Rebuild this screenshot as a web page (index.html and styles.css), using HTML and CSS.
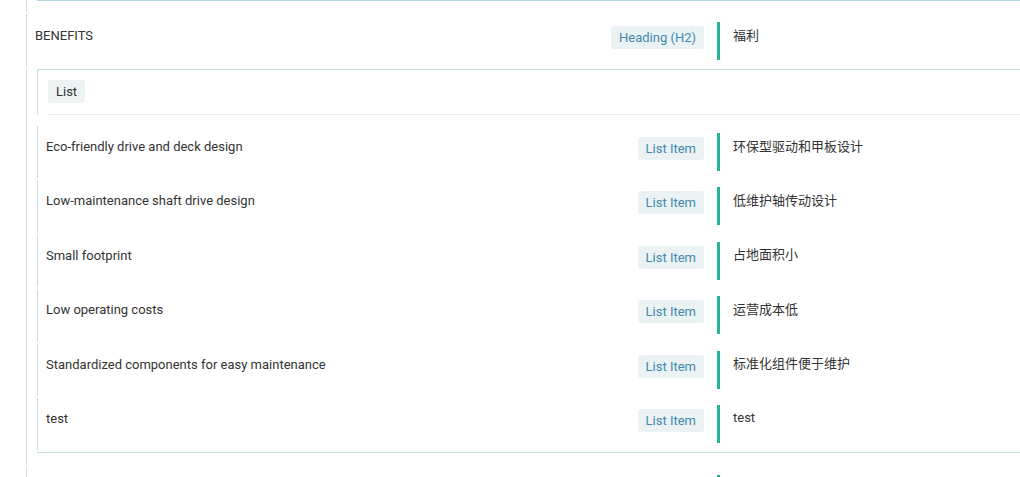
FILE: index.html
```html
<!DOCTYPE html>
<html lang="en">
<head>
  <meta charset="UTF-8">
  <meta name="viewport" content="width=device-width, initial-scale=1.0">
  <title>Translation editor</title>
  <link rel="stylesheet" href="styles.css">
</head>
<body>
  <div class="page">
    <div class="row prev">
      <div class="box-tail"></div>
    </div>

    <div class="row">
      <div class="src">
        <span class="text">BENEFITS</span>
        <span class="tag">Heading (H2)</span>
      </div>
      <div class="tgt">福利</div>
    </div>

    <div class="row list-row">
      <div class="box">
        <div class="box-head">
          <span class="tag tag-plain">List</span>
          <div class="sep"></div>
        </div>
        <div class="item">
          <div class="src">
            <span class="text">Eco-friendly drive and deck design</span>
            <span class="tag">List Item</span>
          </div>
          <div class="tgt">环保型驱动和甲板设计</div>
        </div>
        <div class="item">
          <div class="src">
            <span class="text">Low-maintenance shaft drive design</span>
            <span class="tag">List Item</span>
          </div>
          <div class="tgt">低维护轴传动设计</div>
        </div>
        <div class="item">
          <div class="src">
            <span class="text">Small footprint</span>
            <span class="tag">List Item</span>
          </div>
          <div class="tgt">占地面积小</div>
        </div>
        <div class="item">
          <div class="src">
            <span class="text">Low operating costs</span>
            <span class="tag">List Item</span>
          </div>
          <div class="tgt">运营成本低</div>
        </div>
        <div class="item">
          <div class="src">
            <span class="text">Standardized components for easy maintenance</span>
            <span class="tag">List Item</span>
          </div>
          <div class="tgt">标准化组件便于维护</div>
        </div>
        <div class="item">
          <div class="src">
            <span class="text">test</span>
            <span class="tag">List Item</span>
          </div>
          <div class="tgt">test</div>
        </div>
      </div>
    </div>

    <div class="row">
      <div class="src">
        <span class="text"></span>
      </div>
      <div class="tgt"></div>
    </div>
  </div>
</body>
</html>
```

FILE: styles.css
```css
html, body {
  overflow: hidden;
}

body {
  margin: 0;
  background: #fff;
  font-family: Roboto, "Noto Sans CJK SC", sans-serif;
  font-size: 13px;
  line-height: 20px;
  color: #333;
}

.page {
  width: 1300px;
  padding-left: 26px;
}

.row {
  display: flex;
  align-items: flex-start;
  border-left: 1px solid #dcdcdc;
  padding: 8px 0 7px 8px;
  margin-bottom: 2px;
}

.prev {
  padding: 0 0 0 8px;
  height: 12px;
}

.box-tail {
  flex: 1;
  margin-left: 2px;
  border-top: 1px solid #b3d8dd;
}

.list-row {
  padding: 0 0 12px 8px;
}

.src {
  flex: 0 0 682px;
  box-sizing: border-box;
  padding-right: 13px;
  display: flex;
  justify-content: space-between;
  align-items: flex-start;
}

.src .text {
  margin-top: 4px;
}

.tag {
  display: inline-block;
  margin-top: 4px;
  padding: 2px 8px;
  line-height: 19px;
  border-radius: 3px;
  background: #eaf2f4;
  color: #4389b0;
  white-space: nowrap;
}

.tag-plain {
  margin-top: 0;
  background: #edf2f3;
  color: #333;
}

.tgt {
  flex: 1;
  box-sizing: border-box;
  min-height: 38px;
  padding: 3.5px 0 0 13px;
  border-left: 3px solid #2ab196;
}

.box {
  flex: 1;
  margin-left: 2px;
  padding-bottom: 2px;
  border: 1px solid #c6dde1;
  border-left: none;
}

.box-head {
  border-left: 1px solid #c6dde1;
  padding: 10px 10px 0 10px;
}

.sep {
  height: 1px;
  background: #e7e9ea;
  margin: 11px 0;
}

.item {
  display: flex;
  align-items: flex-start;
  border-left: 1px solid #c6dde1;
  padding: 7px 0 7.4px 8px;
}

.item + .item {
  margin-top: 2px;
}

.item .src {
  flex-basis: 671px;
}
```
